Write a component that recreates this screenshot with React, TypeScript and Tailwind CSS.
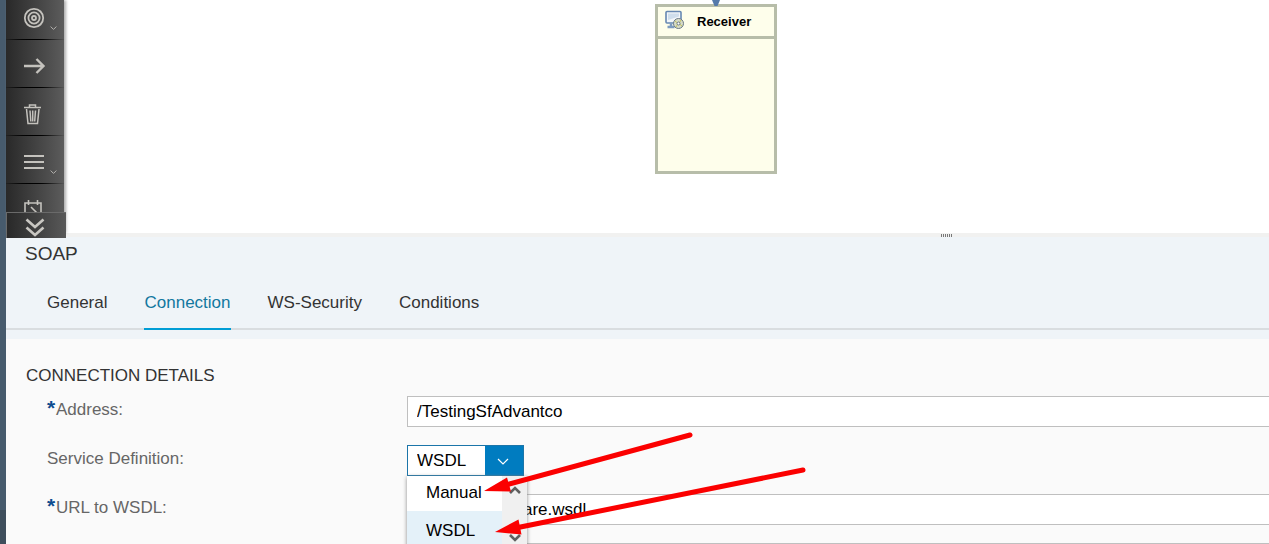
import { useState } from 'react';
import type { ReactNode } from 'react';

interface ToolItem {
    label: string;
    icon: ReactNode;
    hasMenu?: boolean;
}

const tools: ToolItem[] = [
    {
        label: 'Event',
        hasMenu: true,
        icon: (
            <>
                <circle cx="12" cy="12" r="9.2" />
                <circle cx="12" cy="12" r="5.6" />
                <circle cx="12" cy="12" r="2" />
            </>
        ),
    },
    { label: 'Connector', icon: <path d="M2 12H21M14.500 5l7 7-7 7" strokeWidth="2.4" /> },
    {
        label: 'Delete',
        icon: (
            <path d="M2 5.500h17M7.500 5V3h6v2M4.500 7l1.500 14.500h9.500L17 7M8 8.500l.8 11M10.700 8.500v11M13.500 8.500l-.8 11" strokeWidth="1.500" />
        ),
    },
    { label: 'Align', hasMenu: true, icon: <path d="M2 6h20M2 12h20M2 18h20" strokeWidth="2" /> },
    { label: 'Schedule', icon: <path d="M3 22V5h16v17M6.500 2v5M15.500 2v5M9 9l5 5-5 5" strokeWidth="1.600" /> },
];

const tabs = ['General', 'Connection', 'WS-Security', 'Conditions'];

function Chevron({ className, d = 'M1 1l5 5 5-5', width = 1.5 }: { className: string; d?: string; width?: number }) {
    return (
        <svg viewBox="0 0 12 7" className={className} fill="none" stroke="currentColor" strokeWidth={width}>
            <path d={d} />
        </svg>
    );
}

function Toolbar() {
    return (
        <div className="relative z-10 w-[60px] shrink-0">
            <div className="h-full w-[58px] overflow-hidden bg-linear-to-r from-[#292929] to-[#5c5c5c] shadow-[2px_0_3px_#aaa]">
                {tools.map((tool, idx) => (
                    <button
                        key={tool.label}
                        aria-label={tool.label}
                        className={`relative flex w-full items-center pl-4 text-[#c4c2bd] ${idx === 0 ? 'h-10 pb-1' : 'h-12 pt-1'}`}
                    >
                        <svg viewBox="0 0 24 24" className="size-6" fill="none" stroke="currentColor" strokeWidth="1.8">
                            {tool.icon}
                        </svg>
                        {tool.hasMenu && <Chevron className="absolute right-[7px] bottom-2.5 h-1 w-[7px]" />}
                        <span className="absolute inset-x-0 bottom-0 h-px bg-linear-to-r from-[#222] via-black to-[#555]" />
                    </button>
                ))}
            </div>
            {/* Scroll button hangs slightly over the panel */}
            <button
                aria-label="Scroll down"
                className="absolute top-[212px] left-0 flex h-[26px] w-[60px] items-center justify-center border-t border-l border-[#6a6a6a] bg-linear-to-r from-[#292929] to-[#595959] pt-1 pr-[3px] text-[#c9c7c2]"
            >
                <svg viewBox="0 0 20 20" className="size-5" fill="none" stroke="currentColor" strokeWidth="2.6">
                    <path d="M1.500 1.500l8.500 7.500 8.500-7.500M1.500 9.500l8.500 7.500 8.500-7.500" />
                </svg>
            </button>
        </div>
    );
}

function ReceiverNode() {
    return (
        <div className="absolute top-0 left-[649px] w-[122px]">
            <svg viewBox="0 0 8 6" className="mx-auto h-1.5 w-2">
                <path d="M0 0h8L5.500 6h-3z" fill="#5479aa" />
            </svg>
            <div className="-mt-0.5 h-[170px] border-3 border-[#b7bda9] bg-[#fefeeb]">
                <div className="flex h-8 items-center border-b-3 border-[#b7bda9] pl-[7px]">
                    <svg viewBox="0 0 20 20" className="-mt-1 size-5">
                        <rect x="1" y="1.500" width="15" height="11.500" rx="1" fill="#f2f6f9" stroke="#6688b2" strokeWidth="1.600" />
                        <path d="M3 3.500h11v3L3 10z" fill="#cfdeec" />
                        <path d="M2.500 17h7M6 13.500v3" stroke="#7c9bc0" strokeWidth="2.500" />
                        <circle cx="13.500" cy="13.500" r="5" fill="#d8dcc5" stroke="#687886" />
                        <path d="M10 11l3 2.500-2 3.500M17 16l-3-2.500 2-3.500" stroke="#c2c35d" fill="none" />
                        <circle cx="13.500" cy="13.500" r="1.500" fill="#fff" stroke="#687886" />
                    </svg>
                    <span className="ml-3 text-[13px] font-bold text-black">Receiver</span>
                </div>
            </div>
        </div>
    );
}

function FieldLabel({ htmlFor, required, children }: { htmlFor: string; required?: boolean; children: ReactNode }) {
    return (
        <label htmlFor={htmlFor} className="flex items-center pb-1 pl-[41px] text-[17px] leading-6 text-[#666]">
            {required && <span className="h-6 w-[9px] text-[21px] leading-5 font-bold text-[#0d4c8f]">*</span>}
            {children}
        </label>
    );
}

const inputClass = 'h-[31px] w-full border border-r-0 border-[#bfbfbf] bg-white px-[9px] text-[17px] text-black outline-none';

function DefinitionSelect() {
    const [value, setValue] = useState('WSDL');
    const options = ['Manual', 'WSDL'];

    return (
        <div className="relative h-[31px] w-[117px]">
            <div className="flex h-full border border-[#1b75a9] bg-white">
                <select
                    id="definition"
                    value={value}
                    onChange={(e) => setValue(e.target.value)}
                    className="w-[77px] appearance-none bg-white pl-[9px] text-[17px] text-black outline-none"
                >
                    {options.map((option) => (
                        <option key={option}>{option}</option>
                    ))}
                </select>
                <button
                    type="button"
                    aria-label="Open list"
                    className="flex flex-1 items-center justify-center bg-[#007cc0] pr-0.5 text-white"
                >
                    <Chevron className="mt-0.5 h-[7px] w-3" width={1.2} />
                </button>
            </div>

            {/* Open list */}
            <div className="absolute top-full left-0 z-10 flex h-[74px] w-[120px] bg-white shadow-[0_1px_4px_#888]">
                <div role="listbox" aria-label="Service Definition" className="w-[95px] text-[17px] text-black">
                    {options.map((option, idx) => (
                        <div
                            key={option}
                            role="option"
                            aria-selected={option === value}
                            onClick={() => setValue(option)}
                            className={`flex items-center pl-[19px] ${idx === 0 ? 'h-[35px] pb-0.5' : 'h-[39px]'} ${option === value ? 'bg-[#e4f1f9]' : ''}`}
                        >
                            {option}
                        </div>
                    ))}
                </div>
                <div className="flex flex-1 flex-col items-center justify-between bg-[#f0f0f0] pt-2.5 pb-2 text-[#5f5f5f]">
                    <Chevron className="h-[9px] w-3" d="M1 6l5-5 5 5" width={2.6} />
                    <Chevron className="h-[9px] w-3" width={2.6} />
                </div>
            </div>

            {/* Callout arrows */}
            <svg viewBox="480 430 330 110" className="pointer-events-none absolute -top-[15px] left-[73px] z-20 h-[110px] w-[330px] max-w-none">
                <g stroke="#fb0000" strokeWidth="5" strokeLinecap="round">
                    <path d="M506 485L690 435" />
                    <path d="M518 527.500L803 470" />
                </g>
                <path d="M484 491l23-13.500 4 14zM495 532l23.500-12.500 3 15z" fill="#fb0000" />
            </svg>
        </div>
    );
}

export default function App() {
    const [activeTab, setActiveTab] = useState('Connection');
    const [address, setAddress] = useState('/TestingSfAdvantco');
    const [url, setUrl] = useState('are.wsdl');

    return (
        <div className="flex h-screen overflow-hidden bg-white font-['Liberation_Sans',Arial,sans-serif]">
            <div className="flex w-1.5 shrink-0 flex-col bg-[#475b6d]">
                <div className="mt-auto h-[34px] bg-[#3f4e5c]" />
            </div>

            <div className="flex min-w-0 flex-1 flex-col">
                {/* Flow canvas */}
                <div className="relative flex h-[233px] shrink-0">
                    <Toolbar />
                    <ReceiverNode />
                </div>

                {/* Resize handle */}
                <div className="flex h-1 shrink-0 bg-[#f1f1f0] pl-[935px]">
                    <div className="mt-px flex h-1 gap-px">
                        {[0, 1, 2, 3, 4, 5].map((n) => (
                            <span key={n} className="h-1 w-px bg-[#777]" />
                        ))}
                    </div>
                </div>

                {/* Properties */}
                <div className="shrink-0 bg-[#eff4f8] pt-[5px] pb-[9px]">
                    <h1 className="pl-[19px] text-[19px] leading-6 text-[#333]">SOAP</h1>
                    <div role="tablist" className="mt-[25px] flex gap-[37px] border-b-2 border-[#d9dde0] pl-[41px]">
                        {tabs.map((tab) => (
                            <button
                                key={tab}
                                role="tab"
                                aria-selected={tab === activeTab}
                                onClick={() => setActiveTab(tab)}
                                className={`-mb-0.5 border-b-2 pb-[13px] text-[17px] leading-6 ${tab === activeTab ? 'border-[#009dd5] text-[#12789f]' : 'border-transparent text-[#333]'}`}
                            >
                                {tab}
                            </button>
                        ))}
                    </div>
                </div>

                <div className="flex-1 bg-[#fafafa] pt-[25px]">
                    <h2 className="pl-5 text-[17px] leading-6 text-[#333]">CONNECTION DETAILS</h2>
                    <form className="mt-2 grid grid-cols-[401px_1fr] gap-y-[18px]">
                        <FieldLabel htmlFor="address" required>Address:</FieldLabel>
                        <input id="address" className={inputClass} value={address} onChange={(e) => setAddress(e.target.value)} />

                        <FieldLabel htmlFor="definition">Service Definition:</FieldLabel>
                        <DefinitionSelect />

                        <FieldLabel htmlFor="url" required>URL to WSDL:</FieldLabel>
                        <input id="url" className={`${inputClass} pl-[115px]`} value={url} onChange={(e) => setUrl(e.target.value)} />

                        <input aria-label="Service" className={`${inputClass} col-start-2`} />
                    </form>
                </div>
            </div>
        </div>
    );
}
